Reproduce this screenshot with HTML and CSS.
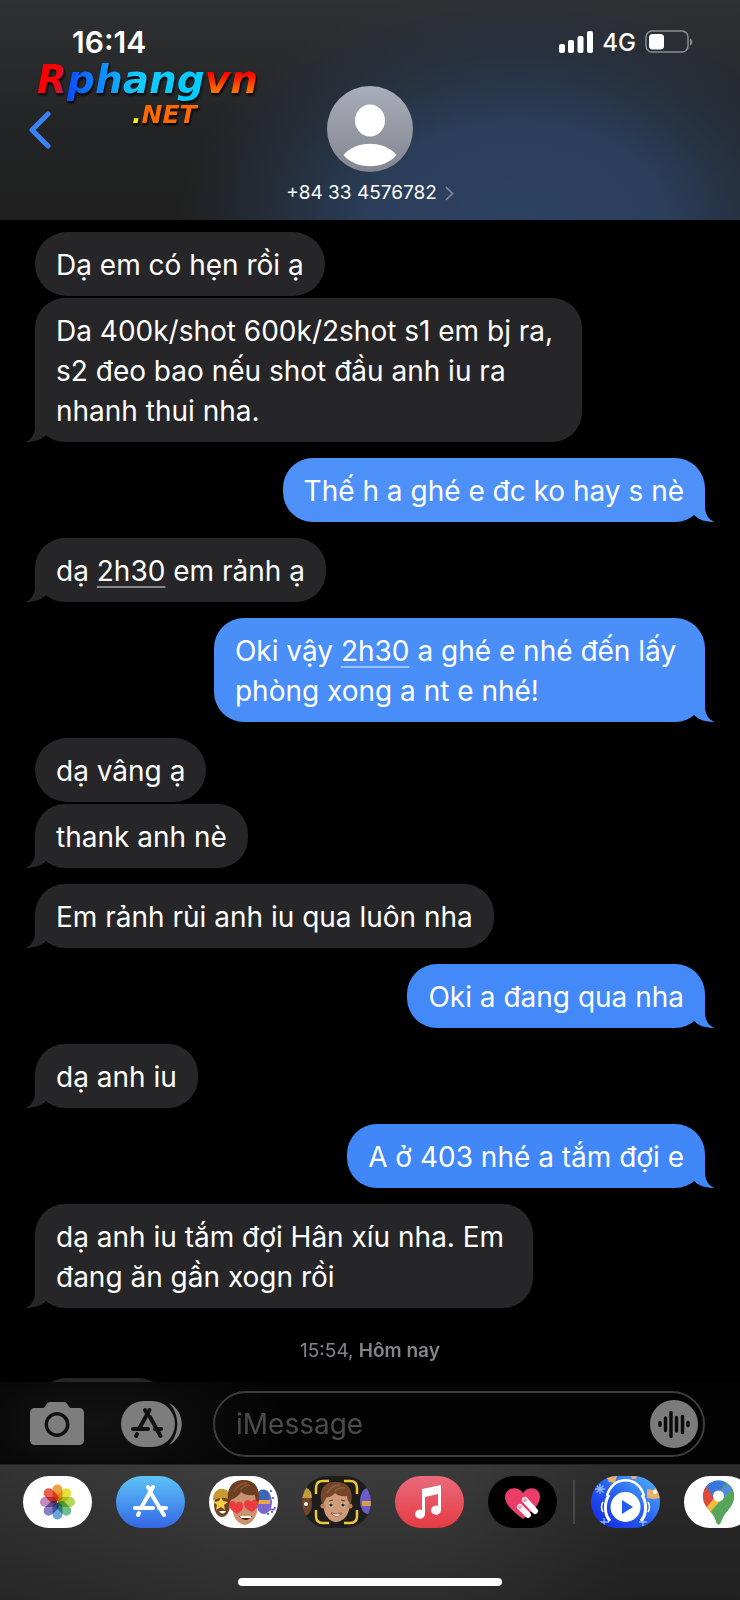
FILE: index.html
```html
<!doctype html>
<html lang="vi">
    <head>
        <meta charset="utf-8">
        <meta name="viewport" content="width=device-width, initial-scale=1">
        <title>+84 33 4576782</title>
        <link rel="stylesheet" href="styles.css">
    </head>
    <body>
    <header class="header">
        <div class="status">
            <span class="time">16:14</span>
            <div class="status-right">
                <svg width="34" height="22" viewBox="0 0 34 22" fill="#fff"><rect x="0" y="13" width="6" height="9" rx="2"/><rect x="9" y="9" width="6" height="13" rx="2"/><rect x="18.500" y="5" width="6" height="17" rx="2"/><rect x="28" y="0" width="6" height="22" rx="2"/></svg>
                <span class="network">4G</span>
                <svg width="48" height="24" viewBox="0 0 48 24"><rect x="1" y="1" width="42" height="21" rx="6" fill="none" stroke="#8b8f94" stroke-width="1.500"/><rect x="4" y="4" width="15" height="15.500" rx="3.500" fill="#fff"/><path d="M45 8.500c3 1 3 6 0 7z" fill="#8b8f94"/></svg>
            </div>
        </div>
        <div class="nav">
            <button class="back" aria-label="Back"><svg width="22" height="38" viewBox="0 0 22 38"><path d="M19 3 3 19l16 16" fill="none" stroke="#3b82f7" stroke-width="5" stroke-linecap="round" stroke-linejoin="round"/></svg></button>
            <a href="#" class="contact">
                <svg width="86" height="86" viewBox="0 0 86 86">
                    <defs><linearGradient id="av" x2="0" y2="1"><stop stop-color="#a9adba"/><stop offset="1" stop-color="#83868e"/></linearGradient></defs>
                    <circle cx="43" cy="43" r="43" fill="url(#av)"/>
                    <ellipse cx="43" cy="34.500" rx="15" ry="16" fill="#fff"/>
                    <path d="M16.500 69C29 54 57 54 69.500 69C57 84 29 84 16.500 69z" fill="#fff"/>
                </svg>
                <span class="number">+84 33 4576782 <svg width="9" height="15" viewBox="0 0 9 15"><path d="M1 1l6.500 6.500L1 14" fill="none" stroke="#858b95" stroke-width="1.600"/></svg></span>
            </a>
        </div>
        <div class="logo">
            <div class="logo-name"><span class="logo-r">R</span><span class="logo-phang">phang</span><span class="logo-vn">vn</span></div>
            <div class="logo-net"><span>.</span>NET</div>
        </div>
    </header>

    <main class="thread">
        <p class="msg in">Dạ em có hẹn rồi ạ</p>
        <p class="msg in next tail">Da 400k/shot 600k/2shot s1 em bj ra,&nbsp;<br>s2 đeo bao nếu shot đầu anh iu ra<br>nhanh thui nha.</p>
        <p class="msg out tail">Thế h a ghé e đc ko hay s nè</p>
        <p class="msg in tail">dạ <a href="#">2h30</a> em rảnh ạ</p>
        <p class="msg out tail">Oki vậy <a href="#">2h30</a> a ghé e nhé đến lấy&nbsp;<br>phòng xong a nt e nhé!</p>
        <p class="msg in">dạ vâng ạ</p>
        <p class="msg in next tail">thank anh nè</p>
        <p class="msg in tail">Em rảnh rùi anh iu qua luôn nha</p>
        <p class="msg out tail">Oki a đang qua nha</p>
        <p class="msg in tail">dạ anh iu</p>
        <p class="msg out tail">A ở 403 nhé a tắm đợi e</p>
        <p class="msg in tail">dạ anh iu tắm đợi Hân xíu nha. Em&nbsp;<br>đang ăn gần xogn rồi</p>
        <div class="stamp">15:54, <b>Hôm nay</b></div>
        <p class="msg in empty"></p>
    </main>

    <form class="composer">
        <button type="button" class="cam" aria-label="Camera"><svg width="54" height="44" viewBox="0 0 54 44"><path fill="#7d7d7d" fill-rule="evenodd" d="M5 6h8c3 0 3-6 7-6h14c4 0 4 6 7 6h8c3 0 5 2 5 5v27c0 3-2 5-5 5H5c-3 0-5-2-5-5V11c0-3 2-5 5-5zM27 10a12.500 12.500 0 1 0 .1 0zM27 13.500a9 9 0 1 1-.1 0z"/></svg></button>
        <button type="button" class="apps" aria-label="Apps"><svg width="61" height="46" viewBox="0 0 61 46">
            <rect width="54" height="46" rx="23" fill="#7d7d7d"/>
            <path d="M48 2c17 9 17 33 0 42c11-11 11-31 0-42z" fill="#7d7d7d"/>
            <g stroke="#111" stroke-width="4" stroke-linecap="round"><path d="M28.500 9 18 28M24 9l3 5M29 16l10.500 19M12 28h15M34 28h6M16 33l-1 2"/></g>
        </svg></button>
        <div class="field">
            <input type="text" placeholder="iMessage" aria-label="iMessage">
            <button type="button" class="audio" aria-label="Audio"><svg width="48" height="48" viewBox="0 0 48 48"><circle cx="24" cy="24" r="24" fill="#7b7b7b"/><path d="M10 22.500v3M15.500 18v12.500M21 12.500v24M26.500 17.500v13.500M32.500 16.500v16M38 22.500v3" stroke="#0a0a0a" stroke-width="3.400" stroke-linecap="round"/></svg></button>
        </div>
    </form>

    <nav class="drawer">
        <div class="row">
            <div class="group">
                <a href="#" class="app" aria-label="Photos"><svg viewBox="0 0 69 52"><rect width="69" height="52" fill="#fff"/>
                    <g class="petals">
                    <rect x="29.500" y="8.500" width="10" height="17" rx="5" fill="#f2a03a"/>
                    <rect x="29.500" y="8.500" width="10" height="17" rx="5" fill="#e8e03c" transform="rotate(45 34.500 26)"/>
                    <rect x="29.500" y="8.500" width="10" height="17" rx="5" fill="#b4d655" transform="rotate(90 34.500 26)"/>
                    <rect x="29.500" y="8.500" width="10" height="17" rx="5" fill="#72bd90" transform="rotate(135 34.500 26)"/>
                    <rect x="29.500" y="8.500" width="10" height="17" rx="5" fill="#6aa5da" transform="rotate(180 34.500 26)"/>
                    <rect x="29.500" y="8.500" width="10" height="17" rx="5" fill="#8580c0" transform="rotate(225 34.500 26)"/>
                    <rect x="29.500" y="8.500" width="10" height="17" rx="5" fill="#c48cbf" transform="rotate(270 34.500 26)"/>
                    <rect x="29.500" y="8.500" width="10" height="17" rx="5" fill="#ea5f50" transform="rotate(315 34.500 26)"/>
                    </g></svg></a>
                <a href="#" class="app" aria-label="App Store"><svg viewBox="0 0 69 52"><defs><linearGradient id="as" x2="0" y2="1"><stop stop-color="#5cc4f6"/><stop offset="1" stop-color="#3566e6"/></linearGradient></defs><rect width="69" height="52" fill="url(#as)"/><path d="M37 11 25 32M32 11l3 5M36 19l12 20M19 32h18M43 32h7M23 37l-1 2" stroke="#fff" stroke-width="4" stroke-linecap="round"/></svg></a>
                <a href="#" class="app" aria-label="Memoji stickers"><svg viewBox="0 0 69 52"><rect width="69" height="52" fill="#fff"/>
                    <ellipse cx="13" cy="29" rx="8" ry="12" fill="#704528"/><path d="M4 25c-1-16 18-16 18-1-6-3-12-3-18 1z" fill="#c89b31"/><path d="M12 21l2 4 5 1-4 3 1 5-4-3-5 3 1-5-3-3 5-1z" fill="#f8ce3f"/><path d="M10 35h7q-3 5-7 0z" fill="#fff"/>
                    <ellipse cx="55" cy="26" rx="8" ry="12" fill="#7966cf"/><path d="M49 18c0-6 10-6 11 0v6H49z" fill="#3b67b9"/><path d="M49 24h12v4H49z" fill="#e9a947"/><path d="M61 15h2M63 22h2M58 38h2M62 36h2" stroke="#4c82e8" stroke-width="2"/><path d="M60 33q6 2 6-2" stroke="#8a63cf" fill="none" stroke-width="2"/>
                    <path d="M22 24c0-14 26-14 27 0l-1 12c-2 8-8 13-12 13s-11-5-12-13z" fill="#cb9370"/>
                    <path d="M20 30C16 14 22 5 33 4c13-1 20 9 16 25-2-3-3-6-3-10-7 1-12-1-14-3-3 5-8 7-10 8z" fill="#6d3f22"/>
                    <path d="M25 16c3-6 7-9 13-9M31 14c3-4 6-5 10-5" fill="none" stroke="#8a5631" stroke-width="1.500"/>
                    <path d="M28 38c-4-3-8-5-8-9 0-5 6-5 7-1 2-4 8-2 7 3 0 3-3 5-6 7zM43 36c-4-2-8-4-8-8 0-5 6-5 7-2 2-4 8-2 7 2 0 4-3 6-6 8z" fill="#ee3b3f"/><path d="M30 40h13q-6 8-13 0z" fill="#54191a"/><path d="M31 40h11v2H32z" fill="#fff"/></svg></a>
                <a href="#" class="app" aria-label="Memoji"><svg viewBox="0 0 69 52"><rect width="69" height="52" fill="#1d1d1b"/>
                    <ellipse cx="2" cy="28" rx="8" ry="12" fill="#70472d"/><path d="M0 11c8 0 10 6 10 11H0z" fill="#c29b38"/><circle cx="4" cy="28" r="2" fill="#fff"/>
                    <ellipse cx="66" cy="25" rx="8" ry="13" fill="#6b5bc6"/><path d="M60 25h10v5H60z" fill="#d69e48"/>
                    <path d="M21 24c0-14 27-14 27 0l-1 10c-2 8-8 12-13 12s-10-4-12-12z" fill="#cf9a75"/><circle cx="21" cy="30" r="2.500" fill="#bd8260"/><circle cx="48" cy="30" r="2.500" fill="#bd8260"/>
                    <path d="M20 28C16 14 22 6 33 6c13-1 19 8 16 22-3-2-4-5-4-8-6 1-10-1-12-3-3 4-7 4-9 5-1 2-2 5-4 6z" fill="#74462a"/>
                    <path d="M25 17c3-5 7-8 13-8M33 15c3-3 6-4 10-3" fill="none" stroke="#94603a" stroke-width="1.500"/>
                    <circle cx="29" cy="29" r="2.200" fill="#fff"/><circle cx="41" cy="29" r="2.200" fill="#fff"/><circle cx="29" cy="29" r="1.800" fill="#273727"/><circle cx="41" cy="29" r="1.800" fill="#273727"/><path d="M27 25l4-1M39 24l4 1" stroke="#6b3f26" stroke-width="1.200"/><path d="M29 37q6 2 11 0-5 7-11 0z" fill="#fff" stroke="#8b3d33" stroke-width=".8"/>
                    <path d="M14 18v-6q0-7 7-7h6M42 5h6q7 0 7 7v6M55 34v6q0 7-7 7h-6M27 47h-6q-7 0-7-7v-6" fill="none" stroke="#f2c63c" stroke-width="2.500"/></svg></a>
                <a href="#" class="app" aria-label="Music"><svg viewBox="0 0 69 52"><defs><linearGradient id="mu" x2="0" y2="1"><stop stop-color="#ea6a7c"/><stop offset="1" stop-color="#e53b43"/></linearGradient></defs><rect width="69" height="52" fill="url(#mu)"/><path d="M27 13l19-4v25a5 4.500 0 1 1-3-4V18l-13 3v17a5 4.500 0 1 1-3-4z" fill="#fff"/></svg></a>
                <a href="#" class="app" aria-label="Digital Touch"><svg viewBox="0 0 69 52"><rect width="69" height="52" fill="#000"/><path d="M35 43C26 36 17 29 17 21c0-9 12-12 18-4 6-8 17-5 17 4 0 8-9 15-17 22z" fill="#ea3e68"/><path d="M37 24l10 11M32 31l8 8" stroke="#fff" stroke-width="6" stroke-linecap="round"/><circle cx="37" cy="24" r="2" fill="#f39ab0"/><circle cx="32" cy="31" r="2" fill="#f39ab0"/></svg></a>
            </div>
            <div class="divider"></div>
            <div class="group">
                <a href="#" class="app" aria-label="Zing MP3"><svg viewBox="0 0 69 52"><defs><linearGradient id="zi" x1="0" y1="1" x2="1" y2="0"><stop stop-color="#1020e0"/><stop offset=".5" stop-color="#2860f2"/><stop offset="1" stop-color="#55b8f8"/></linearGradient></defs><rect width="69" height="52" fill="url(#zi)"/>
                    <path d="M15 0h11l-2 7-6-1zM40 0h6l-1 3h-4zM56 13l6 1 5-4 2 12-7 1-6-1z" fill="#e8b26b"/><circle cx="64" cy="16" r="2" fill="#fff"/>
                    <path d="M9 8v10M4 13h10M5.500 9.500l7 7M12.500 9.500l-7 7M13 42v8M8 46h10M52 42v8M48 46h8" stroke="#8fbafa" stroke-width="1.300"/>
                    <path d="M16 20C21 -1 48 -1 53 20" fill="none" stroke="#fff" stroke-width="2.500"/><path d="M18 19c-5 8-5 19 1 26M51 19c5 8 5 19-1 26" fill="none" stroke="#fff" stroke-width="3"/><path d="M12 26q-3 5 0 10M57 26q3 5 0 10" fill="none" stroke="#fff" stroke-width="1.500"/>
                    <circle cx="34.500" cy="31" r="15" fill="#fff"/><path d="M31 24l11 7-11 7z" fill="#1f5cf0"/></svg></a>
                <a href="#" class="app" aria-label="Google Maps"><svg viewBox="0 0 69 52"><defs><clipPath id="pin"><path d="M34.500 48.500c-2 0-2-4-5-9C26 34 19 30 19 20a15.500 15.500 0 0 1 31 0c0 10-7 14-10 19.500-3 5-3.500 9-5.500 9z"/></clipPath></defs><rect width="69" height="52" fill="#fff"/>
                    <g clip-path="url(#pin)"><path d="M10 0h50v52H10z" fill="#57a55b"/><path d="M10 36V26l14-8 22-2-21 25z" fill="#f0bc42"/><path d="M15 28V10l8 0 10 9-12 14z" fill="#dc4b3e"/><path d="M21 9L32 0h16L30 22z" fill="#3b76de"/><path d="M32 20L48 5l6 12-9 4-8 0z" fill="#5488ec"/><path d="M36 25l12-12 10 3v36H28l-5-12z" fill="#57a55b"/><path d="M45 14l-9 10-14 16 8 2 3-10z" fill="#f0bc42" opacity="0"/></g><circle cx="34.500" cy="20" r="5.500" fill="#fff"/></svg></a>
            </div>
        </div>
        <div class="home"></div>
    </nav>
    </body>
</html>
```
FILE: styles.css
```css
*{ box-sizing:border-box}
body{ margin:0; height:100vh; display:flex; flex-direction:column; overflow:hidden; background:#000; color:#fff; font-family:Inter, "Noto Sans", sans-serif; font-size:28px}
button{ border:0; padding:0; background:none; display:block; cursor:pointer}
svg{ display:block}
a{ color:inherit}

.header{ position:relative; flex:none; height:220px; padding-top:24px;
    background:radial-gradient(ellipse 46% 110% at 70% 105%, #2d4363, #2b3d59 45%, rgba(38,52,70,.6) 75%, rgba(34,40,48,0)), linear-gradient(#2f3033, #232425 60%, #1f1f1f)}
.status{ display:flex; justify-content:space-between; align-items:center; height:36px; padding:0 47px 0 72px}
.time{ font-size:30px; font-weight:600}
.status-right{ display:flex; align-items:center; gap:9px}
.network{ font-size:24px; font-weight:500}
.nav{ display:grid; grid-template-columns:1fr auto 1fr; align-items:start; padding:26px 29px 0}
.back{ margin-top:25px; justify-self:start}
.contact{ display:flex; flex-direction:column; align-items:center; gap:8px; text-decoration:none}
.number{ display:flex; align-items:center; gap:8px; font-size:19px; line-height:26px}

/* logo */
.logo{ position:absolute; left:37px; top:58px; font-family:"DejaVu Sans", sans-serif; font-weight:bold; font-style:italic; line-height:1; filter:drop-shadow(1px 2px 1px #000)}
.logo span{ -webkit-background-clip:text; background-clip:text; color:transparent}
.logo-name{ font-size:39px; line-height:44px}
.logo-r{ background-image:linear-gradient(100deg, #f00 60%, #7a3fae)}
.logo-phang{ background-image:linear-gradient(90deg, #0a4cff, #14c8ff 50%, #0cf)}
.logo-vn{ background-image:linear-gradient(#f00 35%, #ff8a00 85%)}
.logo-net{ padding-left:95px; font-size:25px; line-height:26px; color:#ff6a00}
.logo-net span{ background-image:linear-gradient(#ff0, #ff0)}

/* messages */
.thread{ flex:1; min-height:0; overflow:hidden; display:flex; flex-direction:column; padding:12px 35px 0}
.msg{ position:relative; flex:none; margin:0 0 16px; padding:13px 21px 11px; border-radius:32px; line-height:40px; white-space:nowrap}
.msg a{ text-decoration-thickness:2px; text-decoration-color:rgba(255,255,255,.45); text-underline-offset:5px; text-decoration-skip-ink:none}
.in{ align-self:flex-start; background:#262628}
.out{ align-self:flex-end; background:linear-gradient(#5798f9, #3780f7) fixed}
.next{ margin-top:-14px}
.tail{ border-radius:30px}
.tail::after{ content:""; position:absolute; right:-10px; bottom:0; width:30px; height:32px; background:inherit; clip-path:path("M0 0H20V17C20 24 24 30 29.5 32C21 32 14 30 9 25L0 20Z")}
.in.tail::after{ right:auto; left:-10px; transform:scaleX(-1)}
.empty{ width:135px; height:64px}
.stamp{ flex:none; margin:15px 0 15px; line-height:24px; font-size:19px; text-align:center; color:#858589}
.stamp b{ font-weight:600}

.composer{ flex:none; display:flex; align-items:center; margin:0; padding:9px 35px 7px 30px; background:radial-gradient(ellipse 190px 90px at 13% 50%, #131313, #030303)}
.apps{ margin:0 31px 0 37px}
.field{ flex:1; min-width:0; display:flex; align-items:center; height:66px; padding:0 5px 0 21px; border:2px solid #3d3d3f; border-radius:33px}
.field input{ flex:1; width:100%; min-width:0; padding:0; border:0; outline:0; background:none; color:#fff; font:inherit}
.field input::placeholder{ color:#4b4b4d; opacity:1}
.audio{ flex:none}

.drawer{ flex:none; height:136px; display:flex; flex-direction:column; justify-content:space-between; padding:11px 0 14px; border-top:1px solid #222; background:linear-gradient(rgba(0,0,0,0), rgba(0,0,0,.25)), linear-gradient(90deg, #333, #3d3d3d 30%, #3b3b3b 60%, #2b2b2b 85%)}
.row{ display:flex; align-items:center; padding-left:23px; overflow:hidden}
.group{ display:flex; gap:24px; flex:none}
.app{ width:69px; height:52px; border-radius:26px; overflow:hidden}
.petals rect{ mix-blend-mode:multiply}
.divider{ flex:none; width:2px; height:44px; margin:0 16px; background:#474747}
.home{ align-self:center; width:264px; height:8px; border-radius:4px; background:#fff}
```
